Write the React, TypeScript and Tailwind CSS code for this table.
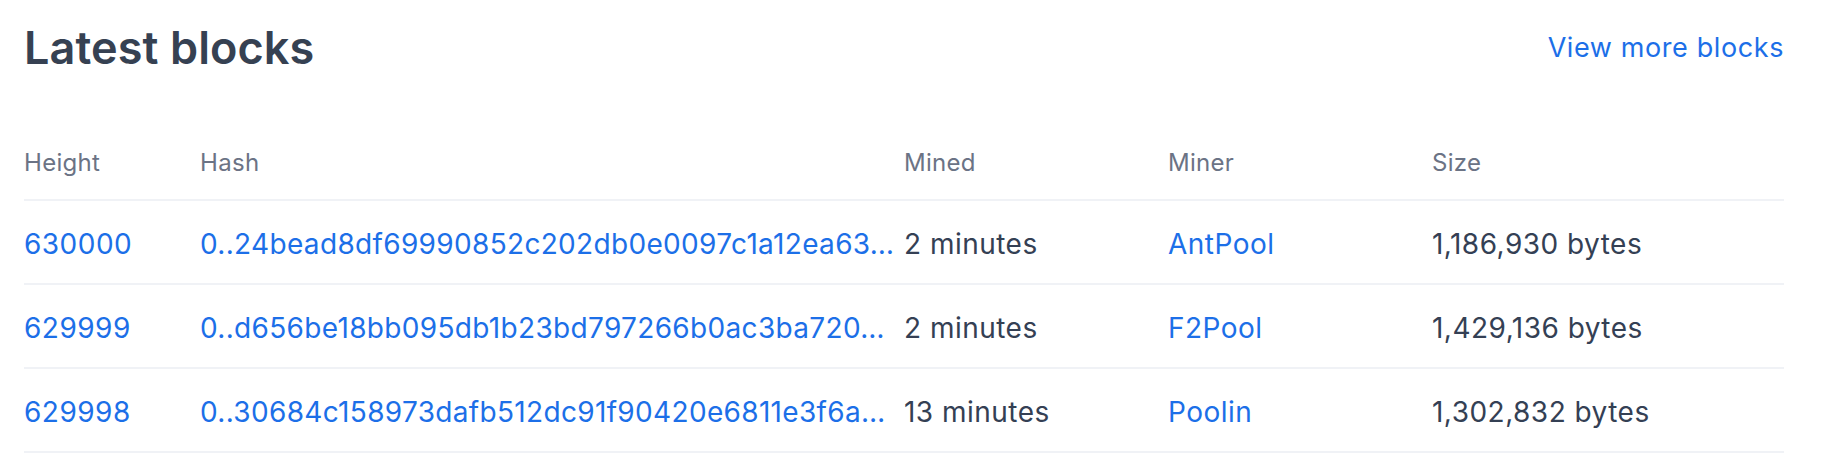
import React from 'react';

type Block = {
  height: string;
  hash: string;
  mined: string;
  miner: string;
  size: string;
};

const blocks: Block[] = [
  {
    height: '630000',
    hash: '0..24bead8df69990852c202db0e0097c1a12ea63…',
    mined: '2 minutes',
    miner: 'AntPool',
    size: '1,186,930 bytes',
  },
  {
    height: '629999',
    hash: '0..d656be18bb095db1b23bd797266b0ac3ba720…',
    mined: '2 minutes',
    miner: 'F2Pool',
    size: '1,429,136 bytes',
  },
  {
    height: '629998',
    hash: '0..30684c158973dafb512dc91f90420e6811e3f6a…',
    mined: '13 minutes',
    miner: 'Poolin',
    size: '1,302,832 bytes',
  },
];

const cols = 'grid grid-cols-[176px_704px_264px_264px_352px]';

export default function App() {
  return (
    <div
      className="w-[1836px] h-[466px] bg-white pl-[24px] text-[#344054]"
      style={{ fontFamily: 'Inter, "Noto Sans", sans-serif' }}
    >
      <div className="w-[1760px]">
        <div className="flex items-center justify-between h-[94px]">
          <h1 className="text-[45px] font-semibold tracking-[0.1px] leading-none text-[#364152]">
            Latest blocks
          </h1>
          <a href="#" className="text-[27px] tracking-[0.6px] leading-none text-[#1c6fe8]">
            View more blocks
          </a>
        </div>

        <div className={`${cols} h-[107px] items-end pb-[18px] border-b-2 border-[#f0f2f6] text-[24px] tracking-[0.3px] text-[#6b7385]`}>
          <div>Height</div>
          <div>Hash</div>
          <div>Mined</div>
          <div>Miner</div>
          <div>Size</div>
        </div>

        {blocks.map((b) => (
          <div
            key={b.height}
            className={`${cols} h-[84px] items-center pt-[3px] border-b-2 border-[#f0f2f6] text-[28px] tracking-[0.48px]`}
          >
            <a href="#" className="text-[#1c6fe8]">
              {b.height}
            </a>
            <a href="#" className="text-[#1c6fe8] tracking-[0.33px] whitespace-nowrap overflow-hidden">
              {b.hash}
            </a>
            <div>{b.mined}</div>
            <a href="#" className="text-[#1c6fe8]">
              {b.miner}
            </a>
            <div>{b.size}</div>
          </div>
        ))}
      </div>
    </div>
  );
}
